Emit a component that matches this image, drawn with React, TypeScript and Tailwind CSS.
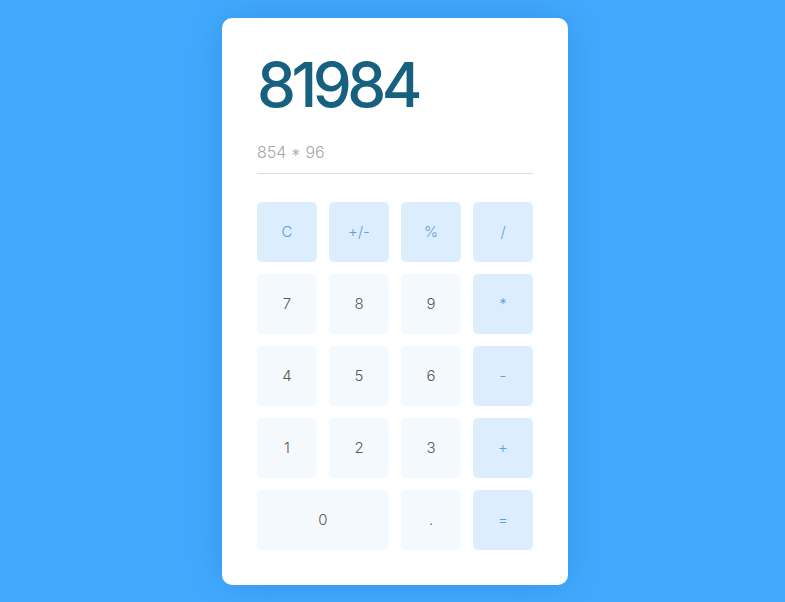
import React from 'react';

type Key = { label: string; kind: 'op' | 'num'; wide?: boolean };

const keys: Key[] = [
  { label: 'C', kind: 'op' },
  { label: '+/-', kind: 'op' },
  { label: '%', kind: 'op' },
  { label: '/', kind: 'op' },
  { label: '7', kind: 'num' },
  { label: '8', kind: 'num' },
  { label: '9', kind: 'num' },
  { label: '*', kind: 'op' },
  { label: '4', kind: 'num' },
  { label: '5', kind: 'num' },
  { label: '6', kind: 'num' },
  { label: '-', kind: 'op' },
  { label: '1', kind: 'num' },
  { label: '2', kind: 'num' },
  { label: '3', kind: 'num' },
  { label: '+', kind: 'op' },
  { label: '0', kind: 'num', wide: true },
  { label: '.', kind: 'num' },
  { label: '=', kind: 'op' },
];

const App = () => {
  return (
    <div
      className="min-h-[602px] w-full bg-[#42aafd] flex justify-center pl-[5px] pt-[18px]"
      style={{ fontFamily: 'Inter, "Noto Sans", sans-serif' }}
    >
      <div className="w-[346px] h-[567px] bg-white rounded-[10px] px-[35px] pt-[36px] pb-[35px] shadow-[0_0_40px_rgba(30,110,200,0.35)]">
        <p className="text-[62px] leading-[62px] font-medium text-[#17607f] tracking-[-4.5px]">81984</p>
        <div className="mt-[24px] pb-[9px] border-b border-[#dddddd]">
          <p className="text-[16px] leading-[24px] font-light text-[#a6a6a6]">854 * 96</p>
        </div>
        <div className="mt-[28px] grid grid-cols-4 gap-[12px]">
          {keys.map((k) => (
            <button
              key={k.label}
              className={`h-[60px] rounded-[5px] flex items-center justify-center text-[15px] font-light ${
                k.wide ? 'col-span-2' : ''
              } ${k.kind === 'op' ? 'bg-[#dcedfd] text-[#5d9ee0]' : 'bg-[#f4f9fe] text-[#5a5a5a]'}`}
            >
              {k.label}
            </button>
          ))}
        </div>
      </div>
    </div>
  );
};

export default App;
